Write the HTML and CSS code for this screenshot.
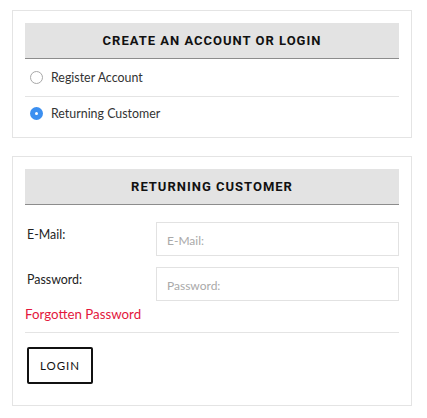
FILE: index.html
```html
<!DOCTYPE html>
<html>
<head>
<meta charset="utf-8">
<link rel="stylesheet" href="styles.css">
</head>
<body>
<div class="page">
  <section class="panel panel-choice">
    <h2 class="panel-title">Create an account or login</h2>
    <label class="choice">
      <span class="radio"></span>
      <span class="choice-text">Register Account</span>
    </label>
    <label class="choice">
      <span class="radio radio-checked"></span>
      <span class="choice-text">Returning Customer</span>
    </label>
  </section>

  <section class="panel panel-login">
    <h2 class="panel-title">Returning Customer</h2>
    <div class="form">
      <div class="form-row">
        <span class="form-label">E-Mail:</span>
        <div class="form-input"><span class="placeholder">E-Mail:</span></div>
      </div>
      <div class="form-row">
        <span class="form-label">Password:</span>
        <div class="form-input"><span class="placeholder">Password:</span></div>
      </div>
    </div>
    <a class="forgot">Forgotten Password</a>
    <div class="actions">
      <button class="btn-login">LOGIN</button>
    </div>
  </section>
</div>
</body>
</html>
```

FILE: styles.css
```css
* { box-sizing: border-box; }
html, body { margin: 0; padding: 0; background: #fff; }
body {
  font-family: "Lato", "Open Sans", sans-serif;
  color: #222;
  font-size: 13px;
}
.page {
  width: 400px;
  margin: 10px 0 0 12px;
  display: flex;
  flex-direction: column;
  gap: 18px;
}
.panel {
  border: 1px solid #e4e4e4;
  padding: 12px 12px 0;
}
.panel-title {
  margin: 0;
  height: 36px;
  background: #e3e3e3;
  border-bottom: 1px solid #8c8c8c;
  display: flex;
  align-items: center;
  justify-content: center;
  font-family: "Roboto", sans-serif;
  font-weight: 700;
  font-size: 13px;
  letter-spacing: 1px;
  text-transform: uppercase;
  color: #111;
}
.panel-choice { padding-bottom: 7px; }
.choice {
  display: flex;
  align-items: center;
  gap: 8px;
  height: 37px;
  padding-left: 5px;
  color: #333;
  font-size: 12.4px;
}
.choice + .choice {
  border-top: 1px solid #e4e4e4;
  height: 34px;
}
.radio {
  width: 13px;
  height: 13px;
  border-radius: 50%;
  border: 1px solid #a8a8a8;
  background: #fff;
  flex: none;
}
.radio-checked {
  border: none;
  background: #3b8ff0;
  position: relative;
}
.radio-checked::after {
  content: "";
  position: absolute;
  left: 5px;
  top: 5px;
  width: 3px;
  height: 3px;
  border-radius: 50%;
  background: #fff;
}
.form {
  display: flex;
  flex-direction: column;
  gap: 11px;
  padding-top: 17px;
}
.form-row {
  display: grid;
  grid-template-columns: 131px 1fr;
}
.form-label {
  padding: 5px 0 0 2px;
  font-size: 12.4px;
  color: #222;
}
.form-input {
  height: 34px;
  border: 1px solid #e2e2e2;
  display: flex;
  align-items: center;
  padding: 2px 10px 0;
}
.placeholder {
  color: #a9a9a9;
  font-size: 12px;
}
.forgot {
  display: block;
  color: #e3173c;
  font-size: 13.3px;
  padding: 5px 0 10px;
  border-bottom: 1px solid #e4e4e4;
}
.actions {
  padding: 14px 0 21px 2px;
}
.btn-login {
  display: block;
  width: 66px;
  height: 37px;
  background: #fff;
  border: 2px solid #111;
  border-radius: 2px;
  font-family: "Lato", sans-serif;
  font-size: 11.5px;
  letter-spacing: 1px;
  color: #111;
  padding: 0;
}
```
